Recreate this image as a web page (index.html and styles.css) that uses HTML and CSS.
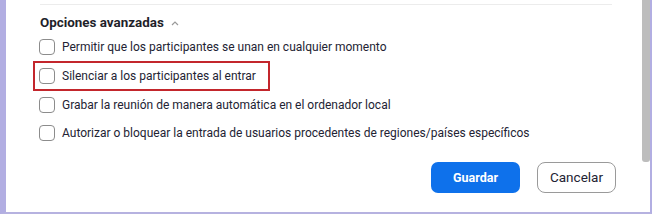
FILE: index.html
```html
<!DOCTYPE html>
<html lang="es">
<head>
<meta charset="utf-8">
<link rel="stylesheet" href="styles.css">
</head>
<body>
<div class="frame">
  <div class="content">
    <div class="divider"></div>
    <div class="heading">
      <span>Opciones avanzadas</span>
      <svg class="chev" width="8" height="5" viewBox="0 0 8 5"><path d="M1 4 L4 1 L7 4" fill="none" stroke="#9a9a9a" stroke-width="1.2"/></svg>
    </div>
    <div class="options">
      <div class="row"><span class="box"></span><span class="label">Permitir que los participantes se unan en cualquier momento</span></div>
      <div class="row hl"><span class="box"></span><span class="label">Silenciar a los participantes al entrar</span></div>
      <div class="row"><span class="box"></span><span class="label">Grabar la reunión de manera automática en el ordenador local</span></div>
      <div class="row"><span class="box"></span><span class="label">Autorizar o bloquear la entrada de usuarios procedentes de regiones/países específicos</span></div>
    </div>
    <div class="actions">
      <button class="btn primary">Guardar</button>
      <button class="btn secondary">Cancelar</button>
    </div>
  </div>
  <div class="scroll"><div class="thumb"></div></div>
</div>
</body>
</html>
```
FILE: styles.css
```css
html, body { margin: 0; padding: 0; background: #ffffff; }
body { font-family: Roboto, "Noto Sans", sans-serif; color: #232333; }
.frame {
  width: 652px; height: 214px; box-sizing: border-box;
  display: flex;
  border-left: 6px solid #b2aee2;
  border-right: 2px solid #b2aee2;
  border-bottom: 2px solid #b6b2e0;
  background: #ffffff;
  overflow: hidden;
}
.content { flex: 1; padding-left: 33px; }
.divider { margin-top: 4px; margin-left: 1px; width: 572px; height: 1px; background: #ececec; }
.heading {
  margin-top: 7px; margin-left: 1px; height: 20px; display: flex; align-items: center; gap: 7px;
  font-size: 13.4px; font-weight: 700; color: #1f1f2a;
}
.chev { margin-top: 2px; }
.options { margin-top: 1px; display: flex; flex-direction: column; align-items: flex-start; }
.row {
  height: 28.7px; display: flex; align-items: center; gap: 7px;
  font-size: 12px; line-height: 16px;
  margin-left: -4px; padding: 0 12px 0 4px; box-sizing: border-box;
}
.row.hl { outline: 2px solid #c3262c; outline-offset: 0; height: 26.7px; margin: 1px 0 1px -4px; }
.box {
  width: 16px; height: 16px; box-sizing: border-box;
  border: 1px solid #8c8c8c; border-radius: 4px; flex: none; background: #fff;
}
.actions { margin-top: 14px; display: flex; justify-content: flex-end; gap: 17px; padding-right: 26px; }
.btn {
  height: 31px; box-sizing: border-box; font-family: inherit; font-size: 12.5px; cursor: pointer;
}
.primary { width: 89px; background: #0e71eb; color: #fff; border: none; border-radius: 7px; font-weight: 700; }
.secondary { width: 79px; background: #fff; color: #232333; border: 1px solid #9a9a9a; border-radius: 8px; font-size: 13.5px; }
.scroll { width: 8px; flex: none; background: #ffffff; }
.thumb { height: 162px; background: #bdbdbd; border-radius: 0 0 3px 3px; }
```
